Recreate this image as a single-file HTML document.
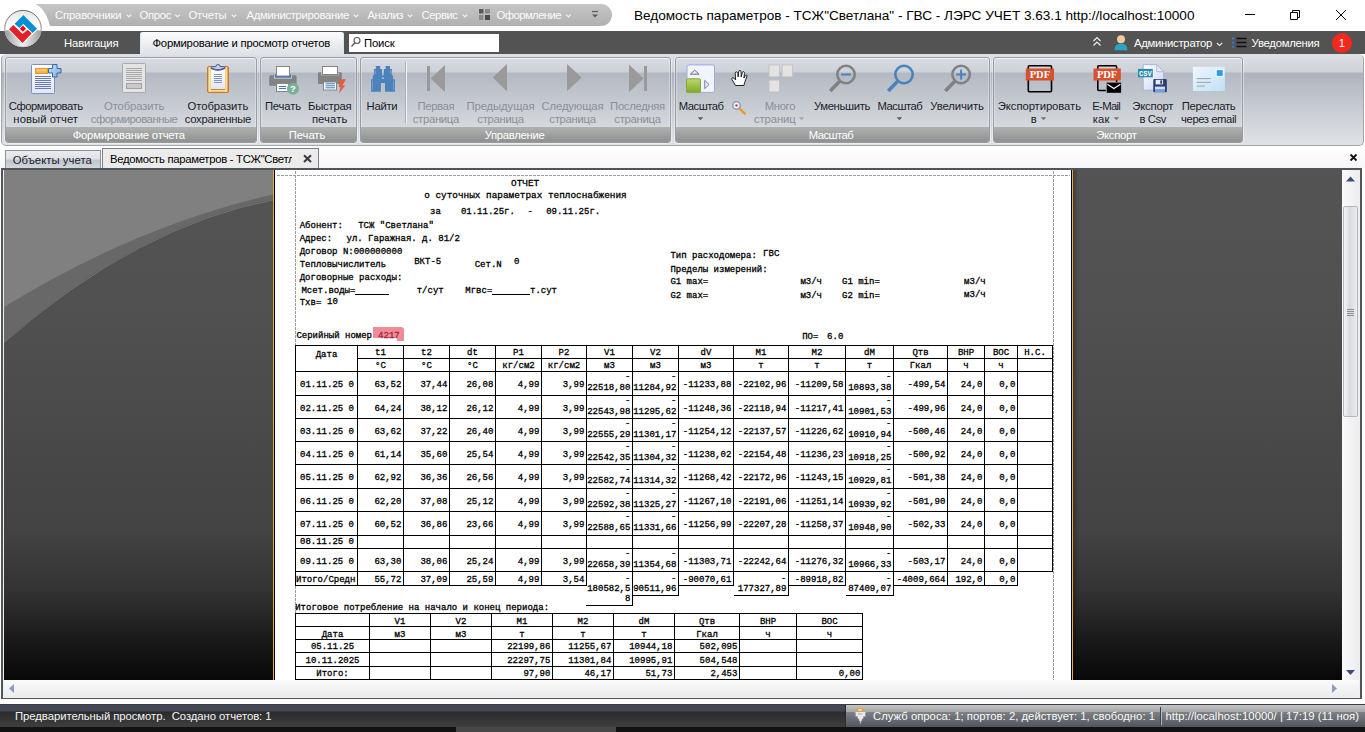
<!DOCTYPE html>
<html lang="ru"><head><meta charset="utf-8"><title>ЛЭРС УЧЕТ</title>
<style>
html,body{margin:0;padding:0}
body{width:1365px;height:732px;overflow:hidden;background:#fff;position:relative;font-family:"Liberation Sans",sans-serif;font-size:11px;color:#1c1c28}
#app{position:absolute;left:0;top:0;width:1365px;height:732px;overflow:hidden}
#app *{position:absolute;box-sizing:border-box;white-space:pre}
.m{font:9px/10px "Liberation Mono",monospace;color:#000;-webkit-text-stroke:.3px #000}
.t{font-size:9.4px}
.ln{background:#000;display:block}
.s{font:11.3px/13px "Liberation Sans",sans-serif}
.lb{font:11.3px/13px "Liberation Sans",sans-serif;text-align:center;width:120px;color:#1c1c28}
.dis{color:#8b8f98}
.cap{font:11.3px/13px "Liberation Sans",sans-serif;text-align:center;color:#fff}
.mn{font:11.3px/13px "Liberation Sans",sans-serif;color:#fbfbfb}
.grp{border:1px solid #989ca3;border-radius:3px;background:linear-gradient(#d8dbe1 0,#cdd1d8 14px,#b3b9c3 15px,#c3c8cf 41px,#d6d9de 70px);box-shadow:inset 0 1px 0 rgba(255,255,255,.6),inset 1px 0 0 rgba(255,255,255,.3),inset -1px 0 0 rgba(255,255,255,.3),1px 0 0 rgba(255,255,255,.4),-1px 0 0 rgba(255,255,255,.4),0 1px 0 rgba(255,255,255,.4)}
.grp>b{left:0;right:0;bottom:0;height:15px;background:linear-gradient(#b0b2b2,#8f9191);border-radius:0 0 2px 2px}
</style></head>
<body><div id="app">
<div style="left:0;top:0;width:1365px;height:31px;background:#fff"></div>
<svg style="left:30px;top:4px" width="590" height="23" viewBox="0 0 590 23"><defs><linearGradient id="pg" x1="0" y1="0" x2="0" y2="1"><stop offset="0" stop-color="#c6c6c6"/><stop offset="1" stop-color="#b0b0b0"/></linearGradient></defs><path d="M5,0 H571 A11,11 0 0 1 571,22 H20 C17,10 12,3 5,0 Z" fill="url(#pg)"/></svg>
<span class="s" style="left:634px;top:7.4px;font-size:13.6px;line-height:18px;color:#000;letter-spacing:-0.011px" id="f50">Ведомость параметров - ТСЖ"Светлана" - ГВС - ЛЭРС УЧЕТ 3.63.1 http://localhost:10000</span>
<svg style="left:1240px;top:5px" width="115" height="20" viewBox="0 0 115 20" fill="none" stroke="#000" stroke-width="1"><path d="M5,9.5H15"/><path d="M50.5,7.5h7v7h-7z M52.5,7.5v-2h7v7h-2"/><path d="M96,5L106,15M106,5L96,15"/></svg>
<div style="left:0;top:31px;width:1365px;height:23px;background:#535353"></div>
<div style="left:1px;top:54px;width:1363px;height:92px;border:1px solid #a2a6ad;border-top-color:#dde0e4;border-radius:5px;background:linear-gradient(#dcdfe4 0,#cfd3d9 17px,#adb3bd 18px,#c2c7ce 45px,#dfe2e5 89px)"></div>
<div class="grp" style="left:5px;top:57px;width:252px;height:86px"><b></b></div>
<div class="grp" style="left:260px;top:57px;width:97px;height:86px"><b></b></div>
<div class="grp" style="left:360px;top:57px;width:311px;height:86px"><b></b></div>
<div class="grp" style="left:675px;top:57px;width:315px;height:86px"><b></b></div>
<div class="grp" style="left:993px;top:57px;width:250px;height:86px"><b></b></div>
<span class="lb" id="f1" style="left:-14.3px;top:99.8px;letter-spacing:-0.470px">Сформировать</span>
<span class="lb" id="f2" style="left:-14.3px;top:113.2px;letter-spacing:0.038px">новый отчет</span>
<span class="lb dis" id="f3" style="left:74.1px;top:99.8px;letter-spacing:-0.138px">Отобразить</span>
<span class="lb dis" id="f4" style="left:74.1px;top:113.2px;letter-spacing:-0.465px">сформированные</span>
<span class="lb" id="f5" style="left:157.9px;top:99.8px;letter-spacing:-0.098px">Отобразить</span>
<span class="lb" id="f6" style="left:157.9px;top:113.2px;letter-spacing:-0.286px">сохраненные</span>
<span class="lb" id="f7" style="left:222.9px;top:99.8px;letter-spacing:-0.186px">Печать</span>
<span class="lb" id="f8" style="left:269.7px;top:99.8px;letter-spacing:-0.264px">Быстрая</span>
<span class="lb" id="f9" style="left:269.7px;top:113.2px;letter-spacing:0.097px">печать</span>
<span class="lb" id="f10" style="left:322.0px;top:99.8px;letter-spacing:-0.290px">Найти</span>
<span class="lb dis" id="f11" style="left:375.9px;top:99.8px;letter-spacing:-0.395px">Первая</span>
<span class="lb dis" id="f12" style="left:375.9px;top:113.2px;letter-spacing:-0.300px">страница</span>
<span class="lb dis" id="f13" style="left:440.5px;top:99.8px;letter-spacing:-0.109px">Предыдущая</span>
<span class="lb dis" id="f14" style="left:440.5px;top:113.2px;letter-spacing:-0.300px">страница</span>
<span class="lb dis" id="f15" style="left:512.5px;top:99.8px;letter-spacing:-0.134px">Следующая</span>
<span class="lb dis" id="f16" style="left:512.5px;top:113.2px;letter-spacing:-0.300px">страница</span>
<span class="lb dis" id="f17" style="left:577.5px;top:99.8px;letter-spacing:-0.328px">Последняя</span>
<span class="lb dis" id="f18" style="left:577.5px;top:113.2px;letter-spacing:-0.300px">страница</span>
<span class="lb" id="f19" style="left:641.1px;top:99.8px;letter-spacing:-0.506px">Масштаб</span>
<span class="lb dis" id="f20" style="left:719.9px;top:99.8px;letter-spacing:-0.319px">Много</span>
<span class="lb dis" id="f21" style="left:714.8px;top:113.2px;letter-spacing:-0.089px">страниц</span>
<span class="lb" id="f22" style="left:782.0px;top:99.8px;letter-spacing:-0.365px">Уменьшить</span>
<span class="lb" id="f23" style="left:839.9px;top:99.8px;letter-spacing:-0.506px">Масштаб</span>
<span class="lb" id="f24" style="left:897.0px;top:99.8px;letter-spacing:-0.098px">Увеличить</span>
<span class="lb" id="f25" style="left:979.4px;top:99.8px;letter-spacing:-0.078px">Экспортировать</span>
<span class="lb" id="f26" style="left:973.6px;top:113.2px;letter-spacing:-0.416px">в</span>
<span class="lb" id="f27" style="left:1046.2px;top:99.8px;letter-spacing:-0.686px">E-Mail</span>
<span class="lb" id="f28" style="left:1041.2px;top:113.2px;letter-spacing:0.193px">как</span>
<span class="lb" id="f29" style="left:1092.8px;top:99.8px;letter-spacing:-0.222px">Экспорт</span>
<span class="lb" id="f30" style="left:1092.8px;top:113.2px;letter-spacing:-0.422px">в Csv</span>
<span class="lb" id="f31" style="left:1148.6px;top:99.8px;letter-spacing:-0.301px">Переслать</span>
<span class="lb" id="f32" style="left:1148.6px;top:113.2px;letter-spacing:-0.438px">через email</span>
<span class="cap" id="f33" style="left:28.8px;width:200px;top:128.6px;letter-spacing:-0.209px">Формирование отчета</span>
<span class="cap" id="f34" style="left:207.0px;width:200px;top:128.6px;letter-spacing:-0.069px">Печать</span>
<span class="cap" id="f35" style="left:414.6px;width:200px;top:128.6px;letter-spacing:-0.291px">Управление</span>
<span class="cap" id="f36" style="left:730.9px;width:200px;top:128.6px;letter-spacing:-0.578px">Масштаб</span>
<span class="cap" id="f37" style="left:1016.4px;width:200px;top:128.6px;letter-spacing:-0.293px">Экспорт</span>
<svg style="left:0;top:54px" width="1365" height="92" viewBox="0 54 1365 92">
<defs>
<linearGradient id="gd1" x1="0" y1="0" x2="0" y2="1"><stop offset="0" stop-color="#ffffff"/><stop offset="1" stop-color="#dfe6f4"/></linearGradient>
<linearGradient id="gor" x1="0" y1="0" x2="0" y2="1"><stop offset="0" stop-color="#f9d27c"/><stop offset="1" stop-color="#efaa3c"/></linearGradient>
<linearGradient id="gpl" x1="0" y1="0" x2="1" y2="1"><stop offset="0" stop-color="#c4e2f4"/><stop offset="1" stop-color="#78aede"/></linearGradient>
<linearGradient id="gcb" x1="0" y1="0" x2="1" y2="0"><stop offset="0" stop-color="#e09030"/><stop offset=".1" stop-color="#fdeaa8"/><stop offset=".2" stop-color="#f6bc54"/><stop offset=".8" stop-color="#f4b44c"/><stop offset=".9" stop-color="#fde09c"/><stop offset="1" stop-color="#c47424"/></linearGradient>
<linearGradient id="ggr" x1="0" y1="0" x2="0" y2="1"><stop offset="0" stop-color="#bcd86c"/><stop offset="1" stop-color="#7cac28"/></linearGradient>
<linearGradient id="gml" x1="0" y1="0" x2="1" y2="1"><stop offset="0" stop-color="#eef7fd"/><stop offset="1" stop-color="#bfdff6"/></linearGradient>
<linearGradient id="gcs" x1="0" y1="0" x2="1" y2="1"><stop offset="0" stop-color="#ffffff"/><stop offset="1" stop-color="#c8d4f0"/></linearGradient>
</defs>
<rect x="31.500" y="64.500" width="23" height="29" rx="1" fill="url(#gd1)" stroke="#7f90c2"/>
<rect x="35.500" y="68.500" width="12" height="5" fill="url(#gor)" stroke="#e2982e"/>
<path d="M35,76.500h16M35,78.500h16M35,80.500h16M35,82.500h16M35,84.500h16M35,86.500h16M35,88.500h16" stroke="#6878b0" stroke-width="1"/>
<path d="M52.500,64.500h4.500v4h4v4.500h-4v4h-4.500v-4h-4v-4.500h4z" fill="url(#gpl)" stroke="#3a6aac" stroke-width="1" stroke-linejoin="round"/>
<rect x="122.500" y="63.500" width="23" height="29" rx="1" fill="#e4e4e4" stroke="#a9a9a9"/>
<path d="M126,68.500h16M126,70.500h16M126,72.500h16M126,74.500h16M126,76.500h16M126,78.500h16M126,80.500h16" stroke="#a8a8a8" stroke-width="1"/>
<rect x="126.500" y="83.500" width="15" height="5" fill="#c9c9c9" stroke="#a2a2a2"/>
<rect x="207.500" y="66.500" width="21" height="26" rx="1.500" fill="url(#gcb)" stroke="#c87a28"/>
<path d="M209.500,90.700h17" stroke="#fde4a0" stroke-width="1.200"/><rect x="211" y="68" width="14" height="21" fill="url(#gd1)"/><path d="M211,89.500h14" stroke="#c8823a" stroke-width="1"/>
<path d="M211.300,67.600Q211.300,66.700 212.500,66.700H215Q216,66.700 216.300,65.700Q217,64.500 218,64.500Q219,64.500 219.700,65.700Q220,66.700 221,66.700H223.500Q224.700,66.700 224.700,67.600V68.300Q218,71.300 211.300,68.300Z" fill="#c9d1e0" stroke="#566aa2" stroke-width="1.200"/><path d="M211.300,68.400Q218,71.700 224.700,68.400" stroke="#4a5e98" stroke-width="1.600" fill="none"/>
<path d="M214,74.500h8M214,76.500h8M214,78.500h8M214,80.500h8M214,82.500h8" stroke="#8494c8" stroke-width="1"/>
<rect x="269.200" y="75.200" width="27.400" height="10.500" rx="1.500" fill="#838383"/>
<rect x="274" y="75.200" width="18" height="3.500" fill="#c6cad1"/>
<rect x="275" y="74.300" width="16" height="3.400" fill="#3c78b8"/>
<rect x="276.500" y="66.500" width="13" height="9.500" fill="#fff" stroke="#858585"/>
<rect x="276.500" y="83.500" width="12" height="8" fill="#fff" stroke="#858585"/>
<path d="M279,86.500h7M279,88.500h7" stroke="#3c78b8" stroke-width="1"/>
<circle cx="293" cy="88.800" r="6" fill="#78b098"/>
<text x="293" y="92.300" font-family="Liberation Sans,sans-serif" font-weight="bold" font-size="9.500" fill="#fff" text-anchor="middle">?</text>
<rect x="318" y="72.300" width="23.800" height="11.700" rx="1.200" fill="#838383"/>
<rect x="321.200" y="72.300" width="17.500" height="3" fill="#c6cad1"/>
<rect x="322.500" y="66.500" width="15" height="8" fill="#fff" stroke="#858585"/>
<rect x="323.500" y="82" width="13" height="8" fill="#fff" stroke="#858585"/>
<path d="M325.500,83.800h9.500M325.500,85.800h9.500M325.500,87.800h9.500" stroke="#3c78b8" stroke-width="1"/>
<path d="M339.800,79.200h6l-3.200,6.300h2.600l-6.200,8l1.600,-6.500h-1.800z" fill="#e0603a"/>
<path d="M375.800,66h4.400v3h1.800v6.200h4v-6.200h-0v0h0v0 M371,91.800v-12.600h1.800v-4h1.100v-6.200h1.900z" fill="none"/>
<path d="M371,91.800V79.200h1.800V75.200h1.100V69h1.900V66h4.400v3h1.800v6.200h1.800V69h1.800V66h4.400v3h1.900v6.200h1.100v4H395v12.600h-10v-8.900h-4.100v8.900z" fill="#4c82bc"/>
<rect x="381.800" y="77.600" width="2.200" height="1" fill="#c8d8ec"/>
<path d="M372.300,80.500v9.500M393.700,80.500v9.500M375.200,70v4M390.800,70v4" stroke="#9cbcdc" stroke-width=".6"/>
<rect x="405" y="62" width="1" height="61" fill="#a9afb9"/><rect x="406" y="62" width="1" height="61" fill="#f2f3f5"/>
<rect x="427" y="66" width="3" height="25" fill="#9a9a9a"/><path d="M430.700,78.500L445,65V92Z" fill="#9a9a9a"/>
<path d="M492.700,77.600L507,64V91.300Z" fill="#9a9a9a"/>
<path d="M581.600,77.600L567,64V91.300Z" fill="#9a9a9a"/>
<path d="M643.600,78.400L629,64.600V92.300Z" fill="#9a9a9a"/><rect x="644" y="66" width="3" height="25" fill="#9a9a9a"/>
<rect x="687" y="64.900" width="27.500" height="27.500" rx="2" fill="#f2f4fb" stroke="#9cacdc"/>
<rect x="686.500" y="78.800" width="14" height="13.600" rx="1" fill="url(#ggr)" stroke="#86aa3c"/>
<path d="M690.300,74.200L694.700,70.200L699.100,74.200Z" fill="#e8ecf4" stroke="#687088" stroke-width="1"/>
<path d="M704.700,80.300L709,84.500L704.700,88.700Z" fill="#e8ecf4" stroke="#7484ac" stroke-width="1"/>
<path d="M735.500,85.500 L732,79.500 Q731.300,77.800 732.800,77.600 Q734,77.800 735.600,80 L735.200,73.200 Q735.400,71.700 736.600,71.900 Q737.600,72 737.800,73.500 L738.200,77 L738.600,71.800 Q738.900,70.400 740,70.500 Q741.100,70.700 741.100,72 L741.200,77 L742.300,72.600 Q742.800,71.400 743.800,71.700 Q744.700,72.100 744.500,73.400 L743.900,78 L745.300,75.600 Q746,74.700 746.700,75.200 Q747.300,75.800 746.800,77 L744.600,82.500 L744,85.500 Z" fill="#fff" stroke="#222" stroke-width="1" stroke-linejoin="round"/>
<path d="M739.200,108.200L744.800,113.600" stroke="#e8a030" stroke-width="2.600" stroke-linecap="round"/>
<circle cx="736.500" cy="105.400" r="3.700" fill="#eef2fa" stroke="#8494b8" stroke-width="1.300"/><circle cx="736.500" cy="105.400" r="1.200" fill="#e03030"/>
<rect x="769" y="64.900" width="10.600" height="12" fill="#e3e3e3" stroke="#c2c2c2"/><rect x="782" y="64.900" width="10.600" height="12" fill="#e3e3e3" stroke="#c2c2c2"/><rect x="769" y="80" width="10.600" height="12" fill="#e3e3e3" stroke="#c2c2c2"/>
<path d="M839.7,81.2L830.2,91" stroke="#828282" stroke-width="3.600"/>
<circle cx="846" cy="74.500" r="8.700" fill="none" stroke="#828282" stroke-width="2.600"/>
<path d="M841.1,74.500h9.800" stroke="#4c82bc" stroke-width="2"/>
<path d="M897.7,81.2L888.2,91" stroke="#4c82bc" stroke-width="3.600"/>
<circle cx="904" cy="74.500" r="8.700" fill="none" stroke="#4c82bc" stroke-width="2.600"/>
<path d="M954.8000000000001,81.2L945.3000000000001,91" stroke="#828282" stroke-width="3.600"/>
<circle cx="961.1" cy="74.500" r="8.700" fill="none" stroke="#828282" stroke-width="2.600"/>
<path d="M956.2,74.500h9.800M961.1,69.600v9.800" stroke="#4c82bc" stroke-width="2"/>
<path d="M697.7,117.3h5.600l-2.800,2.900z" fill="#5c5c5c"/>
<path d="M798.8000000000001,117.3h5.600l-2.800,2.900z" fill="#a6a9b0"/>
<path d="M896.6,117.3h5.600l-2.800,2.900z" fill="#5c5c5c"/>
<path d="M1040.7,117.3h5.600l-2.800,2.900z" fill="#777"/>
<path d="M1113.6000000000001,117.3h5.600l-2.800,2.900z" fill="#777"/>
<rect x="1028.300" y="65.700" width="23.200" height="26" rx="1" fill="none" stroke="#000" stroke-width="1.600"/>
<rect x="1025.800" y="68.500" width="28.200" height="12" fill="#d8502e"/>
<text x="1039.900" y="78.400" font-family="Liberation Serif,serif" font-weight="bold" font-size="10.500" fill="#fff" text-anchor="middle">PDF</text>
<path d="M1116.600,82V66.700a1,1 0 0 0 -1,-1h-16.800a1,1 0 0 0 -1,1v22.800a1,1 0 0 0 1,1h7" fill="none" stroke="#000" stroke-width="1.600"/>
<rect x="1093.500" y="68.500" width="27.300" height="12" fill="#d8502e"/>
<text x="1107.100" y="78.400" font-family="Liberation Serif,serif" font-weight="bold" font-size="10.500" fill="#fff" text-anchor="middle">PDF</text>
<rect x="1106.700" y="82.600" width="14.400" height="10.200" fill="#000"/><path d="M1107.400,84.300l6.500,4.200l6.500,-4.200" fill="none" stroke="#fff" stroke-width="1.100"/>
<path d="M1143.200,64.700h13.500l7,7v18.500h-20.500z" fill="url(#gcs)" stroke="#a8b4d4" stroke-width="1"/><path d="M1156.700,64.700v7h7z" fill="#e4eaf8" stroke="#a8b4d4" stroke-width=".8"/>
<rect x="1138" y="68.900" width="14.800" height="8.400" fill="#2c8cac"/>
<text x="1145.400" y="76" font-family="Liberation Mono,monospace" font-weight="bold" font-size="7" fill="#fff" text-anchor="middle">CSV</text>
<rect x="1153.300" y="79.100" width="13.500" height="13.200" rx="1" fill="#2c3c70"/><rect x="1155.600" y="79.800" width="7.500" height="4.600" fill="#e8ecf4"/><rect x="1160.300" y="80.400" width="1.800" height="3.300" fill="#2c3c70"/><rect x="1155" y="86.600" width="10" height="5.700" fill="#cfe0f4"/><rect x="1155" y="89.200" width="10" height="3.100" fill="#6fa0dc"/>
<rect x="1192.900" y="66.800" width="32" height="24.200" fill="url(#gml)"/>
<rect x="1216.200" y="69.600" width="7" height="6.800" fill="#2c9ce8" stroke="#fff" stroke-width="1"/>
<path d="M1196.700,78.600h14.100M1196.700,82.300h14.100M1196.700,86.100h8.300" stroke="#9aa0a8" stroke-width="1"/>
</svg>
<div style="left:0;top:146px;width:1365px;height:22px;background:linear-gradient(#fff,#f6f6f9)"></div>
<div style="left:5px;top:150px;width:96px;height:19px;border:1px solid #8d9199;border-bottom:0;background:linear-gradient(#e9ebef 0,#dfe2e8 8px,#bfc5ce 9px,#d4d8de 18px)"></div>
<span class="s" style="left:12.8px;top:153.6px;letter-spacing:0.038px" id="f51">Объекты учета</span>
<div style="left:102px;top:148px;width:217px;height:21px;border:1px solid #7d8188;border-bottom:0;background:#ebebeb"></div>
<span class="s" style="left:110px;top:153px;color:#000;width:182px;overflow:hidden;letter-spacing:-0.293px"><span id="f52" style="position:static">Ведомость параметров - ТСЖ"Светлана"</span></span>
<svg style="left:302px;top:153px" width="11" height="11" viewBox="0 0 11 11"><path d="M2,2.200L9,9M9,2.200L2,9" stroke="#3c3c3c" stroke-width="2"/></svg>
<svg style="left:1349px;top:153px" width="9" height="9" viewBox="0 0 9 9"><path d="M1.5,1.5L7.5,7.5M7.5,1.5L1.5,7.5" stroke="#111" stroke-width="1.8"/></svg>
<div style="left:1px;top:168px;width:1361px;height:531px;background:#50555a"></div>
<div style="left:3px;top:170px;width:1357px;height:528px;background:#f0f0f2"></div>
<div style="left:4px;top:170px;width:1338px;height:510px;background:linear-gradient(#545454 0,#505050 150px,#4a4a4a 250px,#434343 360px,#333 420px,#1c1c1c 465px,#080808 510px)"></div>
<svg style="left:4px;top:170px" width="271" height="180" viewBox="4 170 271 180"><path d="M4,170 H275 V199 Q137.5,225 4,342 Z" fill="#686868"/><path d="M4,170 H275 V194 Q137.5,225 4,307 Z" fill="#808080"/><path d="M275,199.5 Q137.5,225.5 4,342.5" stroke="#747474" stroke-width="1" fill="none"/></svg>
<div style="left:273px;top:170px;width:1px;height:510px;background:#f2a64c"></div>
<div style="left:274px;top:170px;width:1px;height:510px;background:#000"></div>
<div style="left:275px;top:170px;width:796px;height:510px;background:#fff"></div>
<div style="left:1071px;top:170px;width:1px;height:510px;background:#000"></div>
<div style="left:1072px;top:170px;width:1px;height:510px;background:#f2a64c"></div>
<div style="left:1073px;top:170px;width:6px;height:510px;background:linear-gradient(90deg,rgba(0,0,0,.25),rgba(0,0,0,0))"></div>
<div style="left:277px;top:175px;width:793px;height:1px;background:repeating-linear-gradient(90deg,#9a9a9a 0,#9a9a9a 3px,transparent 3px,transparent 4px)"></div>
<div style="left:295px;top:171px;width:1px;height:175px;background:repeating-linear-gradient(#9a9a9a 0,#9a9a9a 3px,transparent 3px,transparent 4px)"></div>
<div style="left:295px;top:586px;width:1px;height:27px;background:repeating-linear-gradient(#9a9a9a 0,#9a9a9a 3px,transparent 3px,transparent 4px)"></div>
<div style="left:1053px;top:171px;width:1px;height:509px;background:repeating-linear-gradient(#9a9a9a 0,#9a9a9a 3px,transparent 3px,transparent 4px)"></div>
<div id="doc" style="left:0;top:170px;width:1365px;height:510px;overflow:hidden"><div style="left:0;top:-170px;width:1365px;height:732px"><span class="m t" style="left:511.0px;top:178.8px">ОТЧЕТ</span>
<span class="m t" style="left:424.2px;top:190.6px">о суточных параметрах теплоснабжения</span>
<span class="m" style="left:430.0px;top:206.9px">за</span>
<span class="m" style="left:460.9px;top:206.9px">01.11.25г.</span>
<span class="m" style="left:527.5px;top:206.9px">-</span>
<span class="m" style="left:546.2px;top:206.9px">09.11.25г.</span>
<span class="m" style="left:299.7px;top:221.2px">Абонент:</span>
<span class="m" style="left:358.2px;top:221.2px">ТСЖ "Светлана"</span>
<span class="m" style="left:299.7px;top:233.8px">Адрес:</span>
<span class="m" style="left:346.5px;top:233.8px">ул. Гаражная. д. 81/2</span>
<span class="m" style="left:299.7px;top:247.1px">Договор N:000000000</span>
<span class="m" style="left:299.7px;top:259.9px">Тепловычислитель</span>
<span class="m" style="left:414.2px;top:257.4px">ВКТ-5</span>
<span class="m" style="left:474.7px;top:259.9px">Сет.N</span>
<span class="m" style="left:513.9px;top:257.4px">0</span>
<span class="m" style="left:299.7px;top:273.4px">Договорные расходы:</span>
<span class="m" style="left:301.4px;top:286.0px">Мсет.воды=</span>
<i class="ln" style="left:355px;top:294px;width:34px;height:1px"></i>
<span class="m" style="left:416.7px;top:286.0px">т/сут</span>
<span class="m" style="left:465.3px;top:286.0px">Мгвс=</span>
<i class="ln" style="left:492px;top:294px;width:38px;height:1px"></i>
<span class="m" style="left:530.0px;top:286.0px">т.сут</span>
<span class="m" style="left:299.7px;top:297.7px">Тхв=</span>
<span class="m" style="left:327.0px;top:296.9px">10</span>
<span class="m" style="left:296.4px;top:331.4px">Серийный номер</span>
<i style="left:372.700px;top:327px;width:31px;height:11px;background:#f08c98;border-radius:0 3px 0 0"></i><i style="left:397.200px;top:338px;width:6.500px;height:2.800px;background:#f08c98"></i>
<span class="m" style="left:378.1px;top:331.4px;color:#a02838;-webkit-text-stroke-color:#a02838">4217</span>
<span class="m" style="left:670.4px;top:250.9px">Тип расходомера:</span>
<span class="m" style="left:763.1px;top:248.6px">ГВС</span>
<span class="m" style="left:670.4px;top:264.6px">Пределы измерений:</span>
<span class="m" style="left:670.4px;top:277.3px">G1 max=</span>
<span class="m" style="left:800.4px;top:277.3px">м3/ч</span>
<span class="m" style="left:842.0px;top:277.3px">G1 min=</span>
<span class="m" style="left:964.1px;top:277.3px">м3/ч</span>
<span class="m" style="left:670.4px;top:291.4px">G2 max=</span>
<span class="m" style="left:800.4px;top:291.4px">м3/ч</span>
<span class="m" style="left:842.0px;top:291.4px">G2 min=</span>
<span class="m" style="left:964.1px;top:290.2px">м3/ч</span>
<span class="m" style="left:802.2px;top:331.6px">ПО=</span>
<span class="m" style="left:827.1px;top:331.6px">6.0</span>
<i class="ln" style="left:295px;top:345px;width:758px;height:1px"></i>
<i class="ln" style="left:357px;top:358px;width:696px;height:1px"></i>
<i class="ln" style="left:295px;top:371px;width:758px;height:1px"></i>
<i class="ln" style="left:295px;top:395px;width:758px;height:1px"></i>
<i class="ln" style="left:295px;top:418px;width:758px;height:1px"></i>
<i class="ln" style="left:295px;top:441px;width:758px;height:1px"></i>
<i class="ln" style="left:295px;top:464px;width:758px;height:1px"></i>
<i class="ln" style="left:295px;top:488px;width:758px;height:1px"></i>
<i class="ln" style="left:295px;top:511px;width:758px;height:1px"></i>
<i class="ln" style="left:295px;top:535px;width:758px;height:1px"></i>
<i class="ln" style="left:295px;top:548px;width:758px;height:1px"></i>
<i class="ln" style="left:295px;top:571px;width:758px;height:1px"></i>
<i class="ln" style="left:295px;top:345px;width:1px;height:227px"></i>
<i class="ln" style="left:357px;top:345px;width:1px;height:227px"></i>
<i class="ln" style="left:403px;top:345px;width:1px;height:227px"></i>
<i class="ln" style="left:449px;top:345px;width:1px;height:227px"></i>
<i class="ln" style="left:495px;top:345px;width:1px;height:227px"></i>
<i class="ln" style="left:541px;top:345px;width:1px;height:227px"></i>
<i class="ln" style="left:586px;top:345px;width:1px;height:227px"></i>
<i class="ln" style="left:632px;top:345px;width:1px;height:227px"></i>
<i class="ln" style="left:678px;top:345px;width:1px;height:227px"></i>
<i class="ln" style="left:733px;top:345px;width:1px;height:227px"></i>
<i class="ln" style="left:788px;top:345px;width:1px;height:227px"></i>
<i class="ln" style="left:845px;top:345px;width:1px;height:227px"></i>
<i class="ln" style="left:893px;top:345px;width:1px;height:227px"></i>
<i class="ln" style="left:947px;top:345px;width:1px;height:227px"></i>
<i class="ln" style="left:984px;top:345px;width:1px;height:227px"></i>
<i class="ln" style="left:1017px;top:345px;width:1px;height:227px"></i>
<i class="ln" style="left:1052px;top:345px;width:1px;height:227px"></i>
<span class="m" style="left:226.5px;width:200px;text-align:center;top:350.2px">Дата</span>
<span class="m" style="left:280.5px;width:200px;text-align:center;top:347.8px">t1</span>
<span class="m" style="left:280.5px;width:200px;text-align:center;top:361.0px">°C</span>
<span class="m" style="left:326.5px;width:200px;text-align:center;top:347.8px">t2</span>
<span class="m" style="left:326.5px;width:200px;text-align:center;top:361.0px">°C</span>
<span class="m" style="left:372.5px;width:200px;text-align:center;top:347.8px">dt</span>
<span class="m" style="left:372.5px;width:200px;text-align:center;top:361.0px">°C</span>
<span class="m" style="left:418.5px;width:200px;text-align:center;top:347.8px">P1</span>
<span class="m" style="left:418.5px;width:200px;text-align:center;top:361.0px">кг/см2</span>
<span class="m" style="left:464.0px;width:200px;text-align:center;top:347.8px">P2</span>
<span class="m" style="left:464.0px;width:200px;text-align:center;top:361.0px">кг/см2</span>
<span class="m" style="left:509.5px;width:200px;text-align:center;top:347.8px">V1</span>
<span class="m" style="left:509.5px;width:200px;text-align:center;top:361.0px">м3</span>
<span class="m" style="left:555.5px;width:200px;text-align:center;top:347.8px">V2</span>
<span class="m" style="left:555.5px;width:200px;text-align:center;top:361.0px">м3</span>
<span class="m" style="left:606.0px;width:200px;text-align:center;top:347.8px">dV</span>
<span class="m" style="left:606.0px;width:200px;text-align:center;top:361.0px">м3</span>
<span class="m" style="left:661.0px;width:200px;text-align:center;top:347.8px">M1</span>
<span class="m" style="left:661.0px;width:200px;text-align:center;top:361.0px">т</span>
<span class="m" style="left:717.0px;width:200px;text-align:center;top:347.8px">M2</span>
<span class="m" style="left:717.0px;width:200px;text-align:center;top:361.0px">т</span>
<span class="m" style="left:769.5px;width:200px;text-align:center;top:347.8px">dM</span>
<span class="m" style="left:769.5px;width:200px;text-align:center;top:361.0px">т</span>
<span class="m" style="left:820.5px;width:200px;text-align:center;top:347.8px">Qтв</span>
<span class="m" style="left:820.5px;width:200px;text-align:center;top:361.0px">Гкал</span>
<span class="m" style="left:866.0px;width:200px;text-align:center;top:347.8px">ВНР</span>
<span class="m" style="left:866.0px;width:200px;text-align:center;top:361.0px">ч</span>
<span class="m" style="left:901.0px;width:200px;text-align:center;top:347.8px">ВОС</span>
<span class="m" style="left:901.0px;width:200px;text-align:center;top:361.0px">ч</span>
<span class="m" style="left:935.0px;width:200px;text-align:center;top:347.8px">Н.С.</span>
<span class="m" style="left:300.0px;top:379.6px">01.11.25 0</span>
<span class="m" style="right:963.6px;top:379.6px">63,52</span>
<span class="m" style="right:917.6px;top:379.6px">37,44</span>
<span class="m" style="right:871.6px;top:379.6px">26,08</span>
<span class="m" style="right:825.6px;top:379.6px">4,99</span>
<span class="m" style="right:780.6px;top:379.6px">3,99</span>
<span class="m" style="right:734.6px;top:372.1px">-</span>
<span class="m" style="right:734.6px;top:382.5px">22518,80</span>
<span class="m" style="right:688.6px;top:372.1px">-</span>
<span class="m" style="right:688.6px;top:382.5px">11284,92</span>
<span class="m" style="right:633.6px;top:379.6px">-11233,88</span>
<span class="m" style="right:578.6px;top:379.6px">-22102,96</span>
<span class="m" style="right:521.6px;top:379.6px">-11209,58</span>
<span class="m" style="right:473.6px;top:372.1px">-</span>
<span class="m" style="right:473.6px;top:382.5px">10893,38</span>
<span class="m" style="right:419.6px;top:379.6px">-499,54</span>
<span class="m" style="right:382.6px;top:379.6px">24,0</span>
<span class="m" style="right:349.6px;top:379.6px">0,0</span>
<span class="m" style="left:300.0px;top:403.6px">02.11.25 0</span>
<span class="m" style="right:963.6px;top:403.6px">64,24</span>
<span class="m" style="right:917.6px;top:403.6px">38,12</span>
<span class="m" style="right:871.6px;top:403.6px">26,12</span>
<span class="m" style="right:825.6px;top:403.6px">4,99</span>
<span class="m" style="right:780.6px;top:403.6px">3,99</span>
<span class="m" style="right:734.6px;top:396.1px">-</span>
<span class="m" style="right:734.6px;top:406.5px">22543,98</span>
<span class="m" style="right:688.6px;top:396.1px">-</span>
<span class="m" style="right:688.6px;top:406.5px">11295,62</span>
<span class="m" style="right:633.6px;top:403.6px">-11248,36</span>
<span class="m" style="right:578.6px;top:403.6px">-22118,94</span>
<span class="m" style="right:521.6px;top:403.6px">-11217,41</span>
<span class="m" style="right:473.6px;top:396.1px">-</span>
<span class="m" style="right:473.6px;top:406.5px">10901,53</span>
<span class="m" style="right:419.6px;top:403.6px">-499,96</span>
<span class="m" style="right:382.6px;top:403.6px">24,0</span>
<span class="m" style="right:349.6px;top:403.6px">0,0</span>
<span class="m" style="left:300.0px;top:426.6px">03.11.25 0</span>
<span class="m" style="right:963.6px;top:426.6px">63,62</span>
<span class="m" style="right:917.6px;top:426.6px">37,22</span>
<span class="m" style="right:871.6px;top:426.6px">26,40</span>
<span class="m" style="right:825.6px;top:426.6px">4,99</span>
<span class="m" style="right:780.6px;top:426.6px">3,99</span>
<span class="m" style="right:734.6px;top:419.1px">-</span>
<span class="m" style="right:734.6px;top:429.5px">22555,29</span>
<span class="m" style="right:688.6px;top:419.1px">-</span>
<span class="m" style="right:688.6px;top:429.5px">11301,17</span>
<span class="m" style="right:633.6px;top:426.6px">-11254,12</span>
<span class="m" style="right:578.6px;top:426.6px">-22137,57</span>
<span class="m" style="right:521.6px;top:426.6px">-11226,62</span>
<span class="m" style="right:473.6px;top:419.1px">-</span>
<span class="m" style="right:473.6px;top:429.5px">10910,94</span>
<span class="m" style="right:419.6px;top:426.6px">-500,46</span>
<span class="m" style="right:382.6px;top:426.6px">24,0</span>
<span class="m" style="right:349.6px;top:426.6px">0,0</span>
<span class="m" style="left:300.0px;top:449.6px">04.11.25 0</span>
<span class="m" style="right:963.6px;top:449.6px">61,14</span>
<span class="m" style="right:917.6px;top:449.6px">35,60</span>
<span class="m" style="right:871.6px;top:449.6px">25,54</span>
<span class="m" style="right:825.6px;top:449.6px">4,99</span>
<span class="m" style="right:780.6px;top:449.6px">3,99</span>
<span class="m" style="right:734.6px;top:442.1px">-</span>
<span class="m" style="right:734.6px;top:452.5px">22542,35</span>
<span class="m" style="right:688.6px;top:442.1px">-</span>
<span class="m" style="right:688.6px;top:452.5px">11304,32</span>
<span class="m" style="right:633.6px;top:449.6px">-11238,02</span>
<span class="m" style="right:578.6px;top:449.6px">-22154,48</span>
<span class="m" style="right:521.6px;top:449.6px">-11236,23</span>
<span class="m" style="right:473.6px;top:442.1px">-</span>
<span class="m" style="right:473.6px;top:452.5px">10918,25</span>
<span class="m" style="right:419.6px;top:449.6px">-500,92</span>
<span class="m" style="right:382.6px;top:449.6px">24,0</span>
<span class="m" style="right:349.6px;top:449.6px">0,0</span>
<span class="m" style="left:300.0px;top:472.6px">05.11.25 0</span>
<span class="m" style="right:963.6px;top:472.6px">62,92</span>
<span class="m" style="right:917.6px;top:472.6px">36,36</span>
<span class="m" style="right:871.6px;top:472.6px">26,56</span>
<span class="m" style="right:825.6px;top:472.6px">4,99</span>
<span class="m" style="right:780.6px;top:472.6px">3,99</span>
<span class="m" style="right:734.6px;top:465.1px">-</span>
<span class="m" style="right:734.6px;top:475.5px">22582,74</span>
<span class="m" style="right:688.6px;top:465.1px">-</span>
<span class="m" style="right:688.6px;top:475.5px">11314,32</span>
<span class="m" style="right:633.6px;top:472.6px">-11268,42</span>
<span class="m" style="right:578.6px;top:472.6px">-22172,96</span>
<span class="m" style="right:521.6px;top:472.6px">-11243,15</span>
<span class="m" style="right:473.6px;top:465.1px">-</span>
<span class="m" style="right:473.6px;top:475.5px">10929,81</span>
<span class="m" style="right:419.6px;top:472.6px">-501,38</span>
<span class="m" style="right:382.6px;top:472.6px">24,0</span>
<span class="m" style="right:349.6px;top:472.6px">0,0</span>
<span class="m" style="left:300.0px;top:496.6px">06.11.25 0</span>
<span class="m" style="right:963.6px;top:496.6px">62,20</span>
<span class="m" style="right:917.6px;top:496.6px">37,08</span>
<span class="m" style="right:871.6px;top:496.6px">25,12</span>
<span class="m" style="right:825.6px;top:496.6px">4,99</span>
<span class="m" style="right:780.6px;top:496.6px">3,99</span>
<span class="m" style="right:734.6px;top:489.1px">-</span>
<span class="m" style="right:734.6px;top:499.5px">22592,38</span>
<span class="m" style="right:688.6px;top:489.1px">-</span>
<span class="m" style="right:688.6px;top:499.5px">11325,27</span>
<span class="m" style="right:633.6px;top:496.6px">-11267,10</span>
<span class="m" style="right:578.6px;top:496.6px">-22191,06</span>
<span class="m" style="right:521.6px;top:496.6px">-11251,14</span>
<span class="m" style="right:473.6px;top:489.1px">-</span>
<span class="m" style="right:473.6px;top:499.5px">10939,92</span>
<span class="m" style="right:419.6px;top:496.6px">-501,90</span>
<span class="m" style="right:382.6px;top:496.6px">24,0</span>
<span class="m" style="right:349.6px;top:496.6px">0,0</span>
<span class="m" style="left:300.0px;top:519.6px">07.11.25 0</span>
<span class="m" style="right:963.6px;top:519.6px">60,52</span>
<span class="m" style="right:917.6px;top:519.6px">36,86</span>
<span class="m" style="right:871.6px;top:519.6px">23,66</span>
<span class="m" style="right:825.6px;top:519.6px">4,99</span>
<span class="m" style="right:780.6px;top:519.6px">3,99</span>
<span class="m" style="right:734.6px;top:512.1px">-</span>
<span class="m" style="right:734.6px;top:522.5px">22588,65</span>
<span class="m" style="right:688.6px;top:512.1px">-</span>
<span class="m" style="right:688.6px;top:522.5px">11331,66</span>
<span class="m" style="right:633.6px;top:519.6px">-11256,99</span>
<span class="m" style="right:578.6px;top:519.6px">-22207,28</span>
<span class="m" style="right:521.6px;top:519.6px">-11258,37</span>
<span class="m" style="right:473.6px;top:512.1px">-</span>
<span class="m" style="right:473.6px;top:522.5px">10948,90</span>
<span class="m" style="right:419.6px;top:519.6px">-502,33</span>
<span class="m" style="right:382.6px;top:519.6px">24,0</span>
<span class="m" style="right:349.6px;top:519.6px">0,0</span>
<span class="m" style="left:300.0px;top:537.3px">08.11.25 0</span>
<span class="m" style="left:300.0px;top:556.6px">09.11.25 0</span>
<span class="m" style="right:963.6px;top:556.6px">63,30</span>
<span class="m" style="right:917.6px;top:556.6px">38,06</span>
<span class="m" style="right:871.6px;top:556.6px">25,24</span>
<span class="m" style="right:825.6px;top:556.6px">4,99</span>
<span class="m" style="right:780.6px;top:556.6px">3,99</span>
<span class="m" style="right:734.6px;top:549.1px">-</span>
<span class="m" style="right:734.6px;top:559.5px">22658,39</span>
<span class="m" style="right:688.6px;top:549.1px">-</span>
<span class="m" style="right:688.6px;top:559.5px">11354,68</span>
<span class="m" style="right:633.6px;top:556.6px">-11303,71</span>
<span class="m" style="right:578.6px;top:556.6px">-22242,64</span>
<span class="m" style="right:521.6px;top:556.6px">-11276,32</span>
<span class="m" style="right:473.6px;top:549.1px">-</span>
<span class="m" style="right:473.6px;top:559.5px">10966,33</span>
<span class="m" style="right:419.6px;top:556.6px">-503,17</span>
<span class="m" style="right:382.6px;top:556.6px">24,0</span>
<span class="m" style="right:349.6px;top:556.6px">0,0</span>
<span class="m" style="left:296px;top:574.9px;width:60px;overflow:hidden">Итого/Средние</span>
<span class="m" style="right:963.6px;top:574.9px">55,72</span>
<span class="m" style="right:917.6px;top:574.9px">37,09</span>
<span class="m" style="right:871.6px;top:574.9px">25,59</span>
<span class="m" style="right:825.6px;top:574.9px">4,99</span>
<span class="m" style="right:780.6px;top:574.9px">3,54</span>
<span class="m" style="right:633.6px;top:574.9px">-90070,61</span>
<span class="m" style="right:521.6px;top:574.9px">-89918,82</span>
<span class="m" style="right:419.6px;top:574.9px">-4009,664</span>
<span class="m" style="right:382.6px;top:574.9px">192,0</span>
<span class="m" style="right:349.6px;top:574.9px">0,0</span>
<span class="m" style="right:734.6px;top:573.6px">-</span>
<span class="m" style="right:734.6px;top:584.0px">180582,5</span>
<span class="m" style="right:734.6px;top:593.5px">8</span>
<span class="m" style="right:688.6px;top:573.6px">-</span>
<span class="m" style="right:688.6px;top:584.0px">90511,96</span>
<span class="m" style="right:578.6px;top:573.6px">-</span>
<span class="m" style="right:578.6px;top:584.0px">177327,89</span>
<span class="m" style="right:473.6px;top:573.6px">-</span>
<span class="m" style="right:473.6px;top:584.0px">87409,07</span>
<i class="ln" style="left:295px;top:585px;width:292px;height:1px"></i>
<i class="ln" style="left:295px;top:571px;width:1px;height:15px"></i>
<i class="ln" style="left:357px;top:571px;width:1px;height:15px"></i>
<i class="ln" style="left:403px;top:571px;width:1px;height:15px"></i>
<i class="ln" style="left:449px;top:571px;width:1px;height:15px"></i>
<i class="ln" style="left:495px;top:571px;width:1px;height:15px"></i>
<i class="ln" style="left:541px;top:571px;width:1px;height:15px"></i>
<i class="ln" style="left:586px;top:571px;width:1px;height:15px"></i>
<i class="ln" style="left:586px;top:605px;width:47px;height:1px"></i>
<i class="ln" style="left:632px;top:571px;width:1px;height:35px"></i>
<i class="ln" style="left:632px;top:595px;width:47px;height:1px"></i>
<i class="ln" style="left:678px;top:571px;width:1px;height:25px"></i>
<i class="ln" style="left:678px;top:585px;width:56px;height:1px"></i>
<i class="ln" style="left:733px;top:571px;width:1px;height:15px"></i>
<i class="ln" style="left:734px;top:595px;width:55px;height:1px"></i>
<i class="ln" style="left:788px;top:571px;width:1px;height:25px"></i>
<i class="ln" style="left:788px;top:585px;width:58px;height:1px"></i>
<i class="ln" style="left:845px;top:571px;width:1px;height:15px"></i>
<i class="ln" style="left:846px;top:595px;width:48px;height:1px"></i>
<i class="ln" style="left:893px;top:571px;width:1px;height:25px"></i>
<i class="ln" style="left:893px;top:585px;width:125px;height:1px"></i>
<i class="ln" style="left:947px;top:571px;width:1px;height:15px"></i>
<i class="ln" style="left:984px;top:571px;width:1px;height:15px"></i>
<i class="ln" style="left:1017px;top:571px;width:1px;height:15px"></i>
<span class="m" style="left:295.2px;top:603.0px">Итоговое потребление на начало и конец периода:</span>
<i class="ln" style="left:295px;top:613px;width:568px;height:1px"></i>
<i class="ln" style="left:295px;top:626px;width:568px;height:1px"></i>
<i class="ln" style="left:295px;top:639px;width:568px;height:1px"></i>
<i class="ln" style="left:295px;top:652px;width:568px;height:1px"></i>
<i class="ln" style="left:295px;top:666px;width:568px;height:1px"></i>
<i class="ln" style="left:295px;top:679px;width:568px;height:1px"></i>
<i class="ln" style="left:295px;top:613px;width:1px;height:67px"></i>
<i class="ln" style="left:369px;top:613px;width:1px;height:67px"></i>
<i class="ln" style="left:430px;top:613px;width:1px;height:67px"></i>
<i class="ln" style="left:491px;top:613px;width:1px;height:67px"></i>
<i class="ln" style="left:552px;top:613px;width:1px;height:67px"></i>
<i class="ln" style="left:613px;top:613px;width:1px;height:67px"></i>
<i class="ln" style="left:674px;top:613px;width:1px;height:67px"></i>
<i class="ln" style="left:739px;top:613px;width:1px;height:67px"></i>
<i class="ln" style="left:796px;top:613px;width:1px;height:67px"></i>
<i class="ln" style="left:862px;top:613px;width:1px;height:67px"></i>
<span class="m" style="left:232.5px;width:200px;text-align:center;top:629.9px">Дата</span>
<span class="m" style="left:300.0px;width:200px;text-align:center;top:616.6px">V1</span>
<span class="m" style="left:300.0px;width:200px;text-align:center;top:629.9px">м3</span>
<span class="m" style="left:361.0px;width:200px;text-align:center;top:616.6px">V2</span>
<span class="m" style="left:361.0px;width:200px;text-align:center;top:629.9px">м3</span>
<span class="m" style="left:422.0px;width:200px;text-align:center;top:616.6px">M1</span>
<span class="m" style="left:422.0px;width:200px;text-align:center;top:629.9px">т</span>
<span class="m" style="left:483.0px;width:200px;text-align:center;top:616.6px">M2</span>
<span class="m" style="left:483.0px;width:200px;text-align:center;top:629.9px">т</span>
<span class="m" style="left:544.0px;width:200px;text-align:center;top:616.6px">dM</span>
<span class="m" style="left:544.0px;width:200px;text-align:center;top:629.9px">т</span>
<span class="m" style="left:607.0px;width:200px;text-align:center;top:616.6px">Qтв</span>
<span class="m" style="left:607.0px;width:200px;text-align:center;top:629.9px">Гкал</span>
<span class="m" style="left:668.0px;width:200px;text-align:center;top:616.6px">ВНР</span>
<span class="m" style="left:668.0px;width:200px;text-align:center;top:629.9px">ч</span>
<span class="m" style="left:729.5px;width:200px;text-align:center;top:616.6px">ВОС</span>
<span class="m" style="left:729.5px;width:200px;text-align:center;top:629.9px">ч</span>
<span class="m" style="left:232.5px;width:200px;text-align:center;top:642.3px">05.11.25</span>
<span class="m" style="right:814.6px;top:642.3px">22199,86</span>
<span class="m" style="right:753.6px;top:642.3px">11255,67</span>
<span class="m" style="right:692.6px;top:642.3px">10944,18</span>
<span class="m" style="right:627.6px;top:642.3px">502,095</span>
<span class="m" style="left:232.5px;width:200px;text-align:center;top:655.5px">10.11.2025</span>
<span class="m" style="right:814.6px;top:655.5px">22297,75</span>
<span class="m" style="right:753.6px;top:655.5px">11301,84</span>
<span class="m" style="right:692.6px;top:655.5px">10995,91</span>
<span class="m" style="right:627.6px;top:655.5px">504,548</span>
<span class="m" style="left:232.5px;width:200px;text-align:center;top:669.0px">Итого:</span>
<span class="m" style="right:814.6px;top:669.0px">97,90</span>
<span class="m" style="right:753.6px;top:669.0px">46,17</span>
<span class="m" style="right:692.6px;top:669.0px">51,73</span>
<span class="m" style="right:627.6px;top:669.0px">2,453</span>
<span class="m" style="right:504.6px;top:669.0px">0,00</span></div></div>
<div style="left:1342px;top:170px;width:17px;height:510px;background:linear-gradient(90deg,#fafafa,#ececee)"></div>
<div style="left:4px;top:680px;width:1355px;height:17px;background:linear-gradient(#fafafa,#ececee)"></div>
<div style="left:1343px;top:206px;width:15px;height:211px;border:1px solid #b4b7be;border-radius:2px;background:linear-gradient(90deg,#f4f4f6,#d9dade 45%,#ececef)"></div>
<svg style="left:1342px;top:170px" width="17" height="527" viewBox="0 0 17 527"><path d="M4,11.5L8.5,6.5L13,11.5Z" fill="#3d4c7c"/><path d="M4,500L8.500,505L13,500Z" fill="#3d4c7c"/><path d="M5,139.500h7M5,141.500h7M5,143.500h7M5,145.500h7" stroke="#8a8d94" stroke-width="1"/></svg>
<svg style="left:4px;top:680px" width="1340" height="17" viewBox="0 0 1340 17"><path d="M10,4L5,8.500L10,13Z" fill="#8b9bc4"/><path d="M1328,4L1333,8.500L1328,13Z" fill="#8b9bc4"/></svg>
<div style="left:0;top:699px;width:1365px;height:5px;background:#fff"></div>
<div style="left:0;top:704px;width:1365px;height:23px;background:linear-gradient(#2e3138 0,#434955 1px,#434955 7px,#2c2c2c 8px,#3e3e3e 23px)"></div>
<div style="left:846px;top:705px;width:519px;height:22px;background:linear-gradient(#c6c6c6 0,#a6a6a6 6.5px,#7d8185 7px,#50565e 22px)"></div>
<svg style="left:850px;top:705px" width="20" height="22" viewBox="850 705 20 22"><rect x="857" y="708" width="6" height="3.500" rx="1" fill="#f0a020"/><rect x="858.200" y="709" width="3.600" height="1.600" fill="#fde49c"/><rect x="855" y="709" width="1.200" height="2.500" fill="#f0a020"/><rect x="863.800" y="709" width="1.200" height="2.500" fill="#f0a020"/><path d="M853.500,711.500h13v1h-1v4h-2v1.500l-1.500,1.500v1.500h-1v2.500h-1v-2.500h-1v-1.500l-1.500,-1.500v-1.500h-2v-4h-1z" fill="#e8e8e8" stroke="#8a8e94" stroke-width=".5"/><rect x="858" y="713" width="4" height="2" fill="#c4c6ca"/></svg>
<div style="left:845px;top:705px;width:1px;height:22px;background:#2a2c30"></div>
<div style="left:1160px;top:707px;width:1px;height:18px;background:#3c4047"></div><div style="left:1161px;top:707px;width:1px;height:18px;background:#b5b7ba"></div>
<div style="left:0;top:727px;width:1365px;height:5px;background:#121212"></div>
<div style="left:456px;top:727px;width:160px;height:5px;background:#474747"></div>
<span class="s" style="left:15px;top:710px;color:#f4f4f4;letter-spacing:-0.049px" id="f53">Предварительный просмотр.  Создано отчетов: 1</span>
<span class="s" style="left:873px;top:710px;color:#fafafa;letter-spacing:0.012px" id="f54">Служб опроса: 1; портов: 2, действует: 1, свободно: 1</span>
<span class="s" style="left:1165.5px;top:710px;color:#fafafa;letter-spacing:0.033px" id="f55">http://localhost:10000/ | 17:19 (11 ноя)</span>
<span class="mn" style="left:55px;top:8.6px;letter-spacing:-0.178px" id="f38">Справочники</span>
<span class="mn" style="left:139.5px;top:8.6px;letter-spacing:-0.325px" id="f39">Опрос</span>
<span class="mn" style="left:188.5px;top:8.6px;letter-spacing:-0.177px" id="f40">Отчеты</span>
<span class="mn" style="left:246.5px;top:8.6px;letter-spacing:-0.308px" id="f41">Администрирование</span>
<span class="mn" style="left:367.5px;top:8.6px;letter-spacing:-0.440px" id="f42">Анализ</span>
<span class="mn" style="left:421.5px;top:8.6px;letter-spacing:-0.448px" id="f43">Сервис</span>
<span class="mn" style="left:496.5px;top:8.6px;letter-spacing:-0.562px" id="f44">Оформление</span>
<svg style="left:0;top:0" width="1365" height="56" viewBox="0 0 1365 56">
<defs><linearGradient id="lg1" x1="0" y1="0" x2="0" y2="1"><stop offset="0" stop-color="#e4e4e4"/><stop offset=".45" stop-color="#ffffff"/><stop offset="1" stop-color="#f4f4f4"/></linearGradient><linearGradient id="lg2" x1="0" y1="0" x2="1" y2="0"><stop offset="0" stop-color="#9c9c9c"/><stop offset=".5" stop-color="#f2f2f2"/><stop offset="1" stop-color="#9c9c9c"/></linearGradient><linearGradient id="lg3" x1="0" y1="0" x2="0" y2="1"><stop offset="0" stop-color="#5c5c5c"/><stop offset="1" stop-color="#c4c4c4"/></linearGradient></defs>
<path d="M126.7,14.600l2.300,2.200l2.300,-2.200" fill="none" stroke="#f0f0f0" stroke-width="1.300"/>
<path d="M175.2,14.600l2.300,2.200l2.300,-2.200" fill="none" stroke="#f0f0f0" stroke-width="1.300"/>
<path d="M231.7,14.600l2.300,2.200l2.300,-2.200" fill="none" stroke="#f0f0f0" stroke-width="1.300"/>
<path d="M353.7,14.600l2.300,2.200l2.300,-2.200" fill="none" stroke="#f0f0f0" stroke-width="1.300"/>
<path d="M407.7,14.600l2.300,2.200l2.300,-2.200" fill="none" stroke="#f0f0f0" stroke-width="1.300"/>
<path d="M462.7,14.600l2.300,2.200l2.300,-2.200" fill="none" stroke="#f0f0f0" stroke-width="1.300"/>
<path d="M566.2,14.600l2.300,2.200l2.300,-2.200" fill="none" stroke="#f0f0f0" stroke-width="1.300"/>
<rect x="479" y="9" width="4.500" height="4.500" fill="#5a5a5a"/><rect x="485" y="9" width="5" height="4.500" fill="#8a8a8a"/><rect x="479" y="15" width="4.500" height="5" fill="#8a8a8a"/><rect x="485" y="15" width="5" height="5" fill="#4a4a4a"/>
<path d="M592,11.500h6" stroke="#5a5a5a" stroke-width="1.200"/><path d="M592,14.500h6l-3,3z" fill="#5a5a5a"/>
<circle cx="23" cy="29.200" r="19" fill="#000" opacity=".18"/>
<circle cx="23" cy="28.600" r="18.500" fill="url(#lg1)"/>
<path d="M4.700,31 A18.500,18.500 0 0 0 41.300,31 Q23,24 4.700,31Z" fill="url(#lg2)"/>
<circle cx="23" cy="28.600" r="18.200" fill="none" stroke="url(#lg3)" stroke-width=".900"/>
<path d="M23.300,14.400L38.600,29L22.600,43.700L7.300,29.100Z" fill="#fff"/>
<path d="M23.400,15L37.100,28.700L32.700,32.900L23.400,23.900L19.300,28.100L14.600,23.700Z" fill="#0090d8"/>
<path d="M22.500,43L9,29.300L13.500,25L22.500,33.900L27.600,29.700L31.800,33.200Z" fill="#e2202a"/>
<path d="M22.900,25.600L26,28.700L22.900,31.800L19.800,28.700Z" fill="#f80000"/>
<path d="M1093.500,41l3.500,-3.500l3.500,3.500M1093.500,45.500l3.500,-3.500l3.500,3.500" fill="none" stroke="#f0f0f0" stroke-width="1.200"/>
<circle cx="1121" cy="39.300" r="4" fill="#f4c89c"/><path d="M1114.500,50.300Q1114.500,43.500 1121,43.500Q1127.500,43.500 1127.500,50.300Z" fill="#28a4c8"/>
<path d="M1216.800,43l2.700,2.500l2.700,-2.500" fill="none" stroke="#e8e8e8" stroke-width="1.100"/>
<path d="M1236.500,38.500h10M1236.500,42.500h10M1236.500,46.500h10" stroke="#101010" stroke-width="1.300"/><rect x="1232" y="37.500" width="2.200" height="2.200" fill="#2c7cd0"/><rect x="1232" y="41.500" width="2.200" height="2.200" fill="#2c7cd0"/><rect x="1232" y="45.500" width="2.200" height="2.200" fill="#2c7cd0"/>
<circle cx="1342" cy="43" r="10" fill="#f4281e"/>
</svg>
<span class="s" style="left:1133.9px;top:36.6px;color:#fff;letter-spacing:-0.263px" id="f45">Администратор</span>
<span class="s" style="left:1251.6px;top:36.6px;color:#fff;letter-spacing:-0.249px" id="f46">Уведомления</span>
<span class="s" style="left:1332px;width:20px;text-align:center;top:36.600px;color:#fff;font-size:11.3px">1</span>
<span class="s" style="left:64px;top:36.6px;color:#fff;letter-spacing:-0.146px" id="f47">Навигация</span>
<div style="left:140px;top:32px;width:204px;height:23px;border-radius:3px 3px 0 0;background:linear-gradient(#fbfcfd,#dee1e5);box-shadow:inset 1px 0 0 #cdeef6,inset -1px 0 0 #cdeef6"></div>
<span class="s" style="left:152.5px;top:36.6px;color:#000;letter-spacing:-0.224px" id="f48">Формирование и просмотр отчетов</span>
<div style="left:349px;top:34px;width:149.500px;height:18px;background:#fff"></div>
<svg style="left:350px;top:36px" width="12" height="13" viewBox="0 0 12 13"><circle cx="7" cy="4.500" r="3" fill="none" stroke="#555" stroke-width="1.100"/><path d="M4.800,6.700L1.500,10.500" stroke="#555" stroke-width="1.300"/></svg>
<span class="s" style="left:364px;top:36.6px;color:#000;letter-spacing:-0.163px" id="f49">Поиск</span>
</div></body></html>
